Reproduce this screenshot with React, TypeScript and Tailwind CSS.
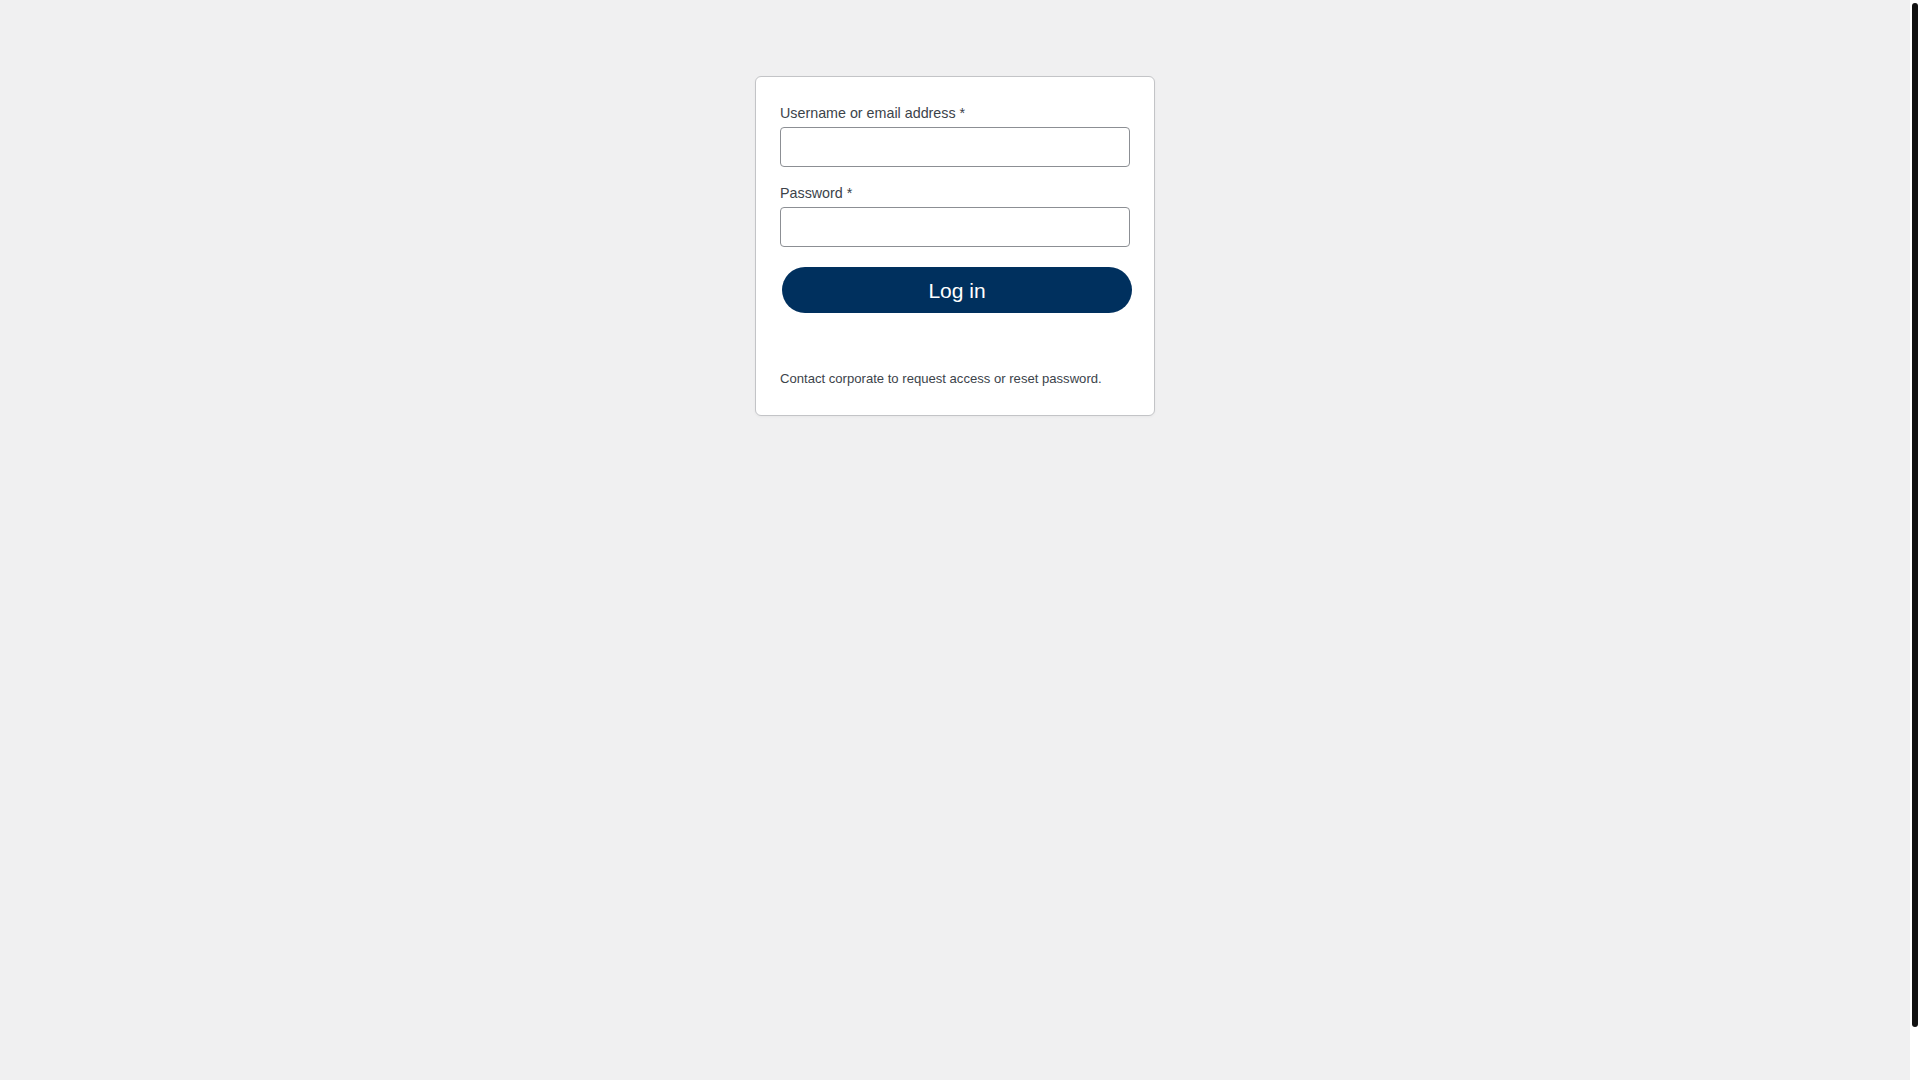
import React from "react";

export default function App() {
  return (
    <div className="h-screen flex bg-[#f0f0f1] font-['Liberation_Sans',Arial,sans-serif] overflow-hidden">
      <main className="flex-1 flex justify-center items-start pt-[76px]">
        <form
          className="w-[400px] bg-white border border-[#c3c4c7] rounded-md px-6 pt-[26px] pb-[26px] shadow-[0_1px_3px_rgba(0,0,0,0.04)]"
          onSubmit={(e) => e.preventDefault()}
        >
          <label className="block text-[14.3px] leading-[21px] text-[#3c434a] mb-[3px]">
            Username or email address *
          </label>
          <input
            type="text"
            className="block w-full h-10 border border-[#8c8f94] rounded bg-white mb-4 px-[5px] text-2xl outline-none"
          />
          <label className="block text-[14.3px] leading-[21px] text-[#3c434a] mb-[3px]">
            Password *
          </label>
          <input
            type="password"
            className="block w-full h-10 border border-[#8c8f94] rounded bg-white mb-4 px-[5px] text-2xl outline-none"
          />
          <button
            type="submit"
            className="block mt-5 ml-[2px] w-full h-[46px] rounded-full bg-[#00305e] text-white text-[21px] leading-none"
          >
            Log in
          </button>
          <p className="mt-[56px] text-[13.1px] leading-[19.5px] text-[#3c434a]">
            Contact corporate to request access or reset password.
          </p>
        </form>
      </main>
      <div className="w-[10px] shrink-0 bg-white pt-[3px] pl-[2px] pr-[2px]">
        <div className="h-[1024px] w-full rounded-full bg-[#111111]" />
      </div>
    </div>
  );
}
